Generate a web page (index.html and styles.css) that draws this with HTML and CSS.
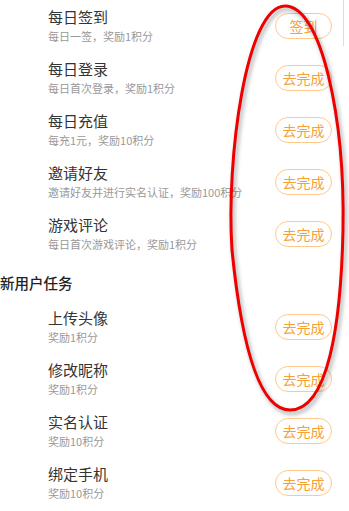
FILE: index.html
```html
<!DOCTYPE html>
<html lang="zh-CN">
<head>
  <meta charset="UTF-8" />
  <meta name="viewport" content="width=device-width, initial-scale=1.0"/>
  <title>任务中心</title>
  <link rel="stylesheet" href="styles.css">
</head>
<body>

  <div class="page">
    <div class="task-list">
      <div class="task">
        <div class="task-info">
          <div class="task-title">每日签到</div>
          <div class="task-desc">每日一签，奖励1积分</div>
        </div>
        <button class="task-btn">签到</button>
      </div>
      <div class="task">
        <div class="task-info">
          <div class="task-title">每日登录</div>
          <div class="task-desc">每日首次登录，奖励1积分</div>
        </div>
        <button class="task-btn">去完成</button>
      </div>
      <div class="task">
        <div class="task-info">
          <div class="task-title">每日充值</div>
          <div class="task-desc">每充1元，奖励10积分</div>
        </div>
        <button class="task-btn">去完成</button>
      </div>
      <div class="task">
        <div class="task-info">
          <div class="task-title">邀请好友</div>
          <div class="task-desc">邀请好友并进行实名认证，奖励100积分</div>
        </div>
        <button class="task-btn">去完成</button>
      </div>
      <div class="task">
        <div class="task-info">
          <div class="task-title">游戏评论</div>
          <div class="task-desc">每日首次游戏评论，奖励1积分</div>
        </div>
        <button class="task-btn">去完成</button>
      </div>
    </div>

    <div class="section-title">新用户任务</div>

    <div class="task-list">
      <div class="task">
        <div class="task-info">
          <div class="task-title">上传头像</div>
          <div class="task-desc">奖励1积分</div>
        </div>
        <button class="task-btn">去完成</button>
      </div>
      <div class="task">
        <div class="task-info">
          <div class="task-title">修改昵称</div>
          <div class="task-desc">奖励1积分</div>
        </div>
        <button class="task-btn">去完成</button>
      </div>
      <div class="task">
        <div class="task-info">
          <div class="task-title">实名认证</div>
          <div class="task-desc">奖励10积分</div>
        </div>
        <button class="task-btn">去完成</button>
      </div>
      <div class="task">
        <div class="task-info">
          <div class="task-title">绑定手机</div>
          <div class="task-desc">奖励10积分</div>
        </div>
        <button class="task-btn">去完成</button>
      </div>
    </div>

    <!-- hand-drawn highlight over the buttons -->
    <svg class="mark" width="349" height="511" viewBox="0 0 349 511">
      <path d="M285,6 C322,6 345,120 343,230 C341,325 328,410 290,410 C256,410 240,330 232,250 C226,160 246,6 285,6 Z"
            fill="none" stroke="#ee0000" stroke-width="3"/>
    </svg>
    <div class="scrollbar"></div>
  </div>

</body>
</html>
```

FILE: styles.css
```css
* {
  box-sizing: border-box;
}

body {
  margin: 0;
  background: #fff;
  font-family: "Noto Sans CJK SC", "Noto Sans", sans-serif;
}

.page {
  position: relative;
  width: 349px;
  height: 511px;
  overflow: hidden;
}

.task {
  display: flex;
  align-items: center;
  justify-content: space-between;
  height: 52px;
  padding-left: 48px;
  padding-right: 17px;
}

.task-info {
  white-space: nowrap;
}

.task-title {
  font-size: 15px;
  line-height: 20px;
  color: #333;
}

.task-desc {
  font-size: 11px;
  line-height: 18px;
  color: #999;
}

.task-btn {
  flex-shrink: 0;
  width: 57px;
  height: 26px;
  padding: 0;
  border: 1px solid #ffc98c;
  border-radius: 13px;
  background: #fff;
  color: #f7a035;
  font-family: inherit;
  font-size: 14px;
  line-height: 24px;
}

.section-title {
  height: 41px;
  padding-top: 5px;
  line-height: 36px;
  font-size: 14.5px;
  font-weight: 500;
  color: #222;
}

.mark {
  position: absolute;
  left: 0;
  top: 0;
  filter: drop-shadow(2px 3px 2px rgba(0, 0, 0, 0.35));
}

.scrollbar {
  position: absolute;
  left: 343px;
  top: 0;
  width: 1px;
  height: 46px;
  background: #ecdcc6;
}
```
